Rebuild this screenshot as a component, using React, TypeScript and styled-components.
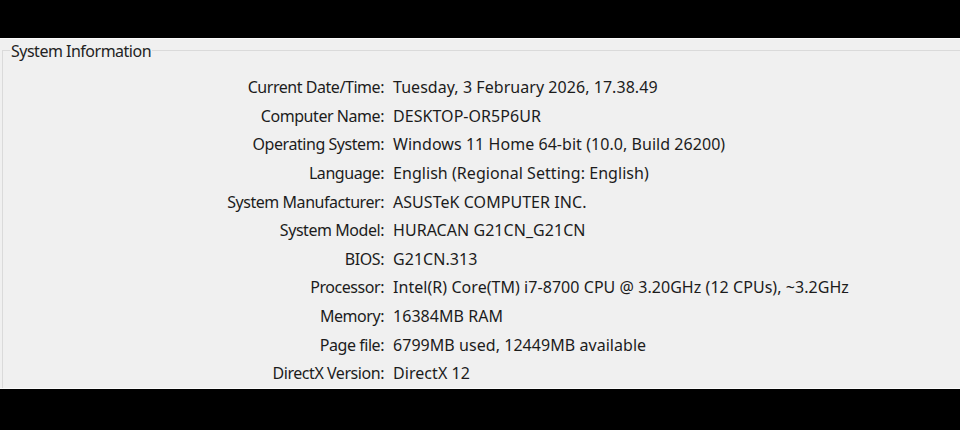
import React from 'react';
import styled, { createGlobalStyle } from 'styled-components';

const Global = createGlobalStyle`
  html, body { margin: 0; background: #000; }
  body { font-family: "Noto Sans", "DejaVu Sans", sans-serif; }
`;

const Screen = styled.div`
  height: 430px;
  display: flex;
  flex-direction: column;
  background: #000;
`;

const Band = styled.div<{ $h: number }>`
  height: ${p => p.$h}px;
  flex: none;
  background: #000;
`;

const Panel = styled.div`
  height: 351px;
  flex: none;
  box-sizing: border-box;
  background: #f0f0f0;
  border-top: 1px solid #fbfbfb;
  border-bottom: 1px solid #fbfbfb;
  overflow: hidden;
`;

const Group = styled.fieldset`
  margin: 0 -40px 0 2px;
  padding: 0;
  min-height: 400px;
  border: 1px solid #dadada;
  border-right: none;
  border-bottom: none;
`;

const Title = styled.legend`
  margin-left: 7px;
  padding: 2px 1px 0;
  font-size: 16px;
  line-height: 20px;
  letter-spacing: -0.5px;
  color: #232323;
`;

const Rows = styled.div`
  display: grid;
  grid-template-columns: 381px auto;
  grid-auto-rows: 28.6px;
  column-gap: 9px;
  align-items: center;
  padding-top: 12px;
  font-size: 16px;
  color: #1c1c1c;
  white-space: nowrap;
`;

const Label = styled.div`
  text-align: right;
  letter-spacing: -0.45px;
`;

const Value = styled.div`
  letter-spacing: 0.05px;
`;

const info: [string, string][] = [
  ['Current Date/Time:', 'Tuesday, 3 February 2026, 17.38.49'],
  ['Computer Name:', 'DESKTOP-OR5P6UR'],
  ['Operating System:', 'Windows 11 Home 64-bit (10.0, Build 26200)'],
  ['Language:', 'English (Regional Setting: English)'],
  ['System Manufacturer:', 'ASUSTeK COMPUTER INC.'],
  ['System Model:', 'HURACAN G21CN_G21CN'],
  ['BIOS:', 'G21CN.313'],
  ['Processor:', 'Intel(R) Core(TM) i7-8700 CPU @ 3.20GHz (12 CPUs), ~3.2GHz'],
  ['Memory:', '16384MB RAM'],
  ['Page file:', '6799MB used, 12449MB available'],
  ['DirectX Version:', 'DirectX 12'],
];

export default function App() {
  return (
    <>
      <Global />
      <Screen>
        <Band $h={38} />
        <Panel>
          <Group>
            <Title>System Information</Title>
            <Rows>
              {info.map(([k, v]) => (
                <React.Fragment key={k}>
                  <Label>{k}</Label>
                  <Value>{v}</Value>
                </React.Fragment>
              ))}
            </Rows>
          </Group>
        </Panel>
        <Band $h={41} />
      </Screen>
    </>
  );
}
